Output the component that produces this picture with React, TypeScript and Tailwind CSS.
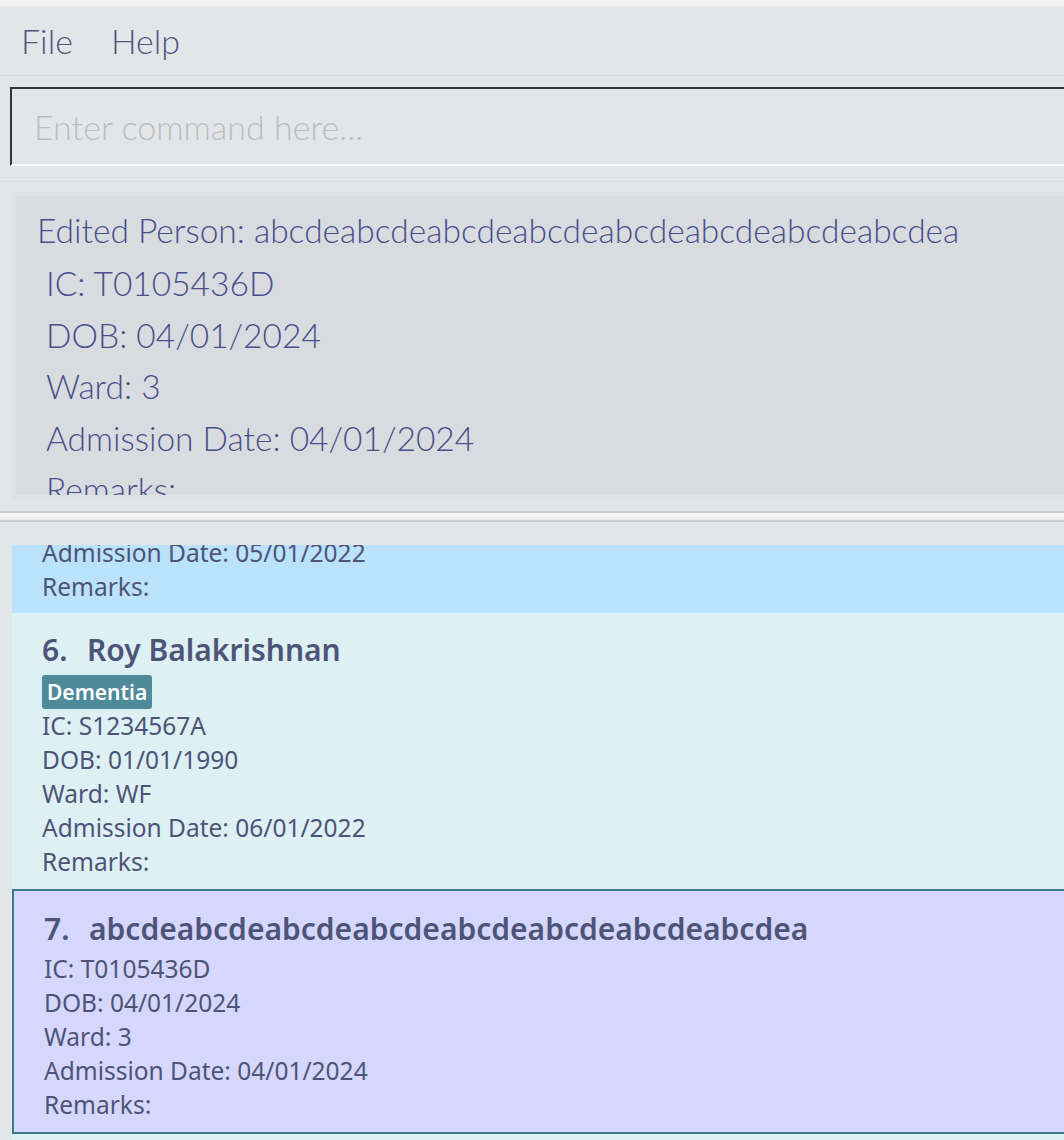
import React from "react";

type Patient = {
  index: number;
  name: string;
  tags: string[];
  ic: string;
  dob: string;
  ward: string;
  admission: string;
  remarks: string;
};

const patients: Patient[] = [
  { index: 6, name: "Roy Balakrishnan", tags: ["Dementia"], ic: "S1234567A", dob: "01/01/1990", ward: "WF", admission: "06/01/2022", remarks: "" },
  { index: 7, name: "abcdeabcdeabcdeabcdeabcdeabcdeabcdeabcdea", tags: [], ic: "T0105436D", dob: "04/01/2024", ward: "3", admission: "04/01/2024", remarks: "" },
];

const lightFont = "font-['Lato','Liberation_Sans',sans-serif] font-light";
const cardFont = "font-['Noto_Sans','Liberation_Sans',sans-serif]";

const PatientCard: React.FC<{ p: Patient; selected?: boolean }> = ({ p, selected }) => (
  <div
    className={
      selected
        ? "ml-[12px] border-2 border-r-0 border-[#3d7a8c] bg-[#d5d7fd] pl-[30px] pt-[17px] pb-[10px]"
        : "ml-[12px] bg-[#ddf0f3] pl-[30px] pt-[16px] pb-[10px]"
    }
  >
    <div className="flex h-[40px] items-center text-[30px] font-semibold text-[#4e5478]">
      <span className="w-[45px]">{p.index}.</span>
      <span className="whitespace-nowrap">{p.name}</span>
    </div>
    {p.tags.length > 0 && (
      <div className="mt-[6px] flex gap-2">
        {p.tags.map((t) => (
          <span key={t} className="h-[34px] rounded-[3px] bg-[#4f8a9b] px-[5px] text-[21px] leading-[34px] font-semibold text-white">
            {t}
          </span>
        ))}
      </div>
    )}
    <div className={selected ? "mt-[4px] text-[24.5px] leading-[34px] text-[#4e5478]" : "text-[24.5px] leading-[34px] text-[#4e5478]"}>
      <div>IC: {p.ic}</div>
      <div>DOB: {p.dob}</div>
      <div>Ward: {p.ward}</div>
      <div>Admission Date: {p.admission}</div>
      <div>Remarks: {p.remarks}</div>
    </div>
  </div>
);

const App: React.FC = () => {
  return (
    <div className="h-[1140px] w-[1064px] overflow-hidden bg-[#e2e6e9]">
      <div className="h-[6px] bg-[#f3f3f3]" />

      {/* menu bar */}
      <div className={`flex h-[70px] items-center gap-[38px] border-b border-[#d9dde0] pl-[21px] text-[34px] text-[#50547e] ${lightFont}`}>
        <span>File</span>
        <span>Help</span>
      </div>

      {/* command box */}
      <div className="pt-[11px]">
        <div className={`ml-[10px] flex h-[79px] items-center border-t-2 border-b-2 border-l-2 border-t-[#333333] border-l-[#333333] border-b-white pl-[22px] text-[34px] text-[#bcbcbc] ${lightFont}`}>
          Enter command here...
        </div>
      </div>

      <div className="mt-[11px] h-px bg-[#d9dde0]" />
      <div className="mt-[3px] h-px bg-[#dadee1]" />

      {/* result display */}
      <div className="ml-[12px] mt-[10px] h-[307px] border-4 border-r-0 border-[#dfe2e5] bg-[#d8dbdf]">
        <div className={`h-full overflow-hidden pl-[21px] pt-[9px] text-[33.5px] text-[#4a4f8c] ${lightFont}`}>
          <div className="whitespace-nowrap leading-[50px]">Edited Person: abcdeabcdeabcdeabcdeabcdeabcdeabcdeabcdea</div>
          <div className="mt-[3px] pl-[9px] leading-[51.5px]">
            <div>IC: T0105436D</div>
            <div>DOB: 04/01/2024</div>
            <div>Ward: 3</div>
            <div>Admission Date: 04/01/2024</div>
            <div>Remarks:</div>
          </div>
        </div>
      </div>

      {/* splitter */}
      <div className="mt-[12px] h-[2px] bg-[#c9c9c9]" />
      <div className="h-[7px] bg-gradient-to-b from-[#f9f9f9] to-[#ededed]" />
      <div className="h-[2px] bg-[#cbcbcb]" />

      {/* patient list */}
      <div className={`pt-[23px] ${cardFont}`}>
        <div className="ml-[12px] h-[68px] overflow-hidden bg-[#bbe2fc] pl-[30px]">
          <div className="-mt-[9px] text-[24.5px] leading-[34px] text-[#4e5478]">
            <div>Admission Date: 05/01/2022</div>
            <div>Remarks:</div>
          </div>
        </div>
        {patients.map((p) => (
          <PatientCard key={p.index} p={p} selected={p.index === 7} />
        ))}
        <div className="ml-[12px] h-[40px] bg-[#ddf0f3]" />
      </div>
    </div>
  );
};

export default App;
